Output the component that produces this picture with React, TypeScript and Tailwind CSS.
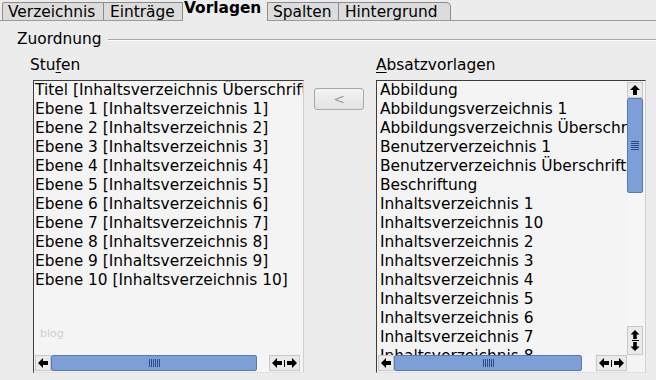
import React from "react";

const leftItems = [
  "Titel [Inhaltsverzeichnis Überschrift]",
  "Ebene 1 [Inhaltsverzeichnis 1]",
  "Ebene 2 [Inhaltsverzeichnis 2]",
  "Ebene 3 [Inhaltsverzeichnis 3]",
  "Ebene 4 [Inhaltsverzeichnis 4]",
  "Ebene 5 [Inhaltsverzeichnis 5]",
  "Ebene 6 [Inhaltsverzeichnis 6]",
  "Ebene 7 [Inhaltsverzeichnis 7]",
  "Ebene 8 [Inhaltsverzeichnis 8]",
  "Ebene 9 [Inhaltsverzeichnis 9]",
  "Ebene 10 [Inhaltsverzeichnis 10]",
];

const rightItems = [
  "Abbildung",
  "Abbildungsverzeichnis 1",
  "Abbildungsverzeichnis Überschrift",
  "Benutzerverzeichnis 1",
  "Benutzerverzeichnis Überschrift",
  "Beschriftung",
  "Inhaltsverzeichnis 1",
  "Inhaltsverzeichnis 10",
  "Inhaltsverzeichnis 2",
  "Inhaltsverzeichnis 3",
  "Inhaltsverzeichnis 4",
  "Inhaltsverzeichnis 5",
  "Inhaltsverzeichnis 6",
  "Inhaltsverzeichnis 7",
  "Inhaltsverzeichnis 8",
];

function ArrowLeft() {
  return (
    <svg width="10" height="10" viewBox="0 0 10 10">
      <path d="M0 5 L5 0 L5 3 L10 3 L10 7 L5 7 L5 10 Z" fill="#000" />
    </svg>
  );
}
function ArrowRight() {
  return (
    <svg width="10" height="10" viewBox="0 0 10 10">
      <path d="M10 5 L5 0 L5 3 L0 3 L0 7 L5 7 L5 10 Z" fill="#000" />
    </svg>
  );
}
function ArrowUp({ h = 10 }: { h?: number }) {
  return (
    <svg width="10" height={h} viewBox="0 0 10 10">
      <path d="M5 0 L10 5 L7 5 L7 10 L3 10 L3 5 L0 5 Z" fill="#000" />
    </svg>
  );
}
function ArrowDown({ h = 10 }: { h?: number }) {
  return (
    <svg width="10" height={h} viewBox="0 0 10 10">
      <path d="M5 10 L10 5 L7 5 L7 0 L3 0 L3 5 L0 5 Z" fill="#000" />
    </svg>
  );
}

function HScroll({ thumb, track }: { thumb: number; track: number }) {
  return (
    <div className="flex h-[16px] bg-[#f4f4f4]">
      <div className="w-[16px] h-[16px] flex items-center justify-center bg-[#eaeaea] border border-[#c8c8c8]">
        <ArrowLeft />
      </div>
      <div className="flex-1 flex bg-[#f2f2f2]">
        <div
          className="h-[16px] bg-[#7c9fd8] border border-[#5a78b4] rounded-[2px] flex items-center justify-center"
          style={{ width: thumb }}
        >
          <div className="flex gap-[1px]">
            {[0, 1, 2, 3, 4, 5].map((i) => (
              <div key={i} className="w-[1px] h-[8px] bg-[#2a4a8a]" />
            ))}
          </div>
        </div>
        <div style={{ width: track }} className="h-[16px] bg-[#f6f6f6]" />
      </div>
      <div className="w-[31px] h-[16px] flex items-center justify-center gap-[2px] bg-[#eaeaea] border border-[#c8c8c8]">
        <ArrowLeft />
        <div className="w-[1px] h-[7px] bg-black" />
        <ArrowRight />
      </div>
    </div>
  );
}

export default function App() {
  const font = { fontFamily: '"DejaVu Sans", Verdana, sans-serif' };
  return (
    <div
      className="w-[656px] h-[380px] bg-[#ececec] text-[15.4px] text-black overflow-hidden"
      style={font}
    >
      {/* tabs */}
      <div className="flex h-[21px] pl-[2px] border-b border-[#9a9a9a] leading-[18px]">
        <div className="w-[102px] mt-[2px] h-[18px] bg-[#dcdcdc] border border-b-0 border-[#8c8c8c] pl-[5px] rounded-tl-[2px]">
          Verzeichnis
        </div>
        <div className="w-[79px] mt-[2px] h-[18px] bg-[#dcdcdc] border border-l-0 border-b-0 border-[#8c8c8c] pl-[6px]">
          Einträge
        </div>
        <div className="w-[84px] h-[21px] -mb-[1px] bg-[#ececec] font-bold pl-[1px] leading-[16px]">
          Vorlagen
        </div>
        <div className="w-[72px] mt-[2px] h-[18px] bg-[#dcdcdc] border border-b-0 border-[#8c8c8c] pl-[5px]">
          Spalten
        </div>
        <div className="w-[112px] mt-[2px] h-[18px] bg-[#dcdcdc] border border-l-0 border-b-0 border-[#8c8c8c] pl-[6px] rounded-tr-[5px]">
          Hintergrund
        </div>
      </div>

      {/* group header */}
      <div className="flex items-center pl-[17px] mt-[9px] h-[19px]">
        <span>Zuordnung</span>
        <div className="flex-1 ml-[6px] border-t border-[#a8a8a8] border-b border-b-white" />
      </div>

      <div className="flex pl-[33px] mt-[1px]">
        {/* left column */}
        <div className="w-[271px] flex flex-col">
          <div className="h-[30px] pt-[5px] -ml-[3px] leading-[20px]">
            Stu<span className="underline underline-offset-2">f</span>en
          </div>
          <div className="h-[293px] bg-[#f4f4f4] border-l border-t border-[#3c3c3c] border-r border-r-[#d0d0d0] border-b border-b-[#e0e0e0] flex flex-col relative">
            <div className="flex-1 pl-[1px] leading-[19px] overflow-hidden whitespace-nowrap">
              {leftItems.map((t) => (
                <div key={t} className="h-[19px]">
                  {t}
                </div>
              ))}
            </div>
            <div className="absolute left-[6px] top-[245px] text-[11px] text-[#cfcfcf]">
              blog
            </div>
            <div className="pl-[1px] pr-[3px] pb-[1px]">
              <HScroll thumb={206} track={12} />
            </div>
          </div>
        </div>

        {/* button column */}
        <div className="w-[72px] flex pt-[38px] pl-[10px]">
          <div className="w-[50px] h-[22px] rounded-[3px] border border-[#a8a8a8] bg-gradient-to-b from-[#f4f4f4] to-[#e2e2e2] flex items-center justify-center text-[#a0a0a0] text-[14px]">
            &lt;
          </div>
        </div>

        {/* right column */}
        <div className="w-[270px] flex flex-col">
          <div className="h-[30px] pt-[5px] leading-[20px]">
            <span className="underline underline-offset-2">A</span>bsatzvorlagen
          </div>
          <div className="h-[293px] bg-[#f4f4f4] border-l border-t border-[#3c3c3c] border-r border-r-[#d0d0d0] border-b border-b-[#e0e0e0] flex flex-col">
            <div className="flex h-[274px]">
              <div className="flex-1 pl-[3px] leading-[19px] overflow-hidden whitespace-nowrap">
                {rightItems.map((t) => (
                  <div key={t} className="h-[19px]">
                    {t}
                  </div>
                ))}
              </div>
              <div className="w-[16px] mr-[2px] flex flex-col bg-[#f6f6f6]">
                <div className="h-[16px] flex items-center justify-center bg-[#eaeaea] border border-[#c8c8c8] mt-[1px]">
                  <ArrowUp />
                </div>
                <div className="h-[95px] bg-[#7c9fd8] border border-[#5a78b4] rounded-[2px] flex items-center justify-center">
                  <div className="flex flex-col gap-[1px]">
                    {[0, 1, 2, 3, 4].map((i) => (
                      <div key={i} className="h-[1px] w-[8px] bg-[#2a4a8a]" />
                    ))}
                  </div>
                </div>
                <div className="flex-1 bg-[#f6f6f6]" />
                <div className="h-[29px] flex flex-col items-center justify-center bg-[#eaeaea] border border-[#c8c8c8]">
                  <ArrowUp h={9} />
                  <div className="w-[7px] h-[1px] bg-black my-[1px]" />
                  <ArrowDown h={9} />
                </div>
              </div>
            </div>
            <div className="flex pl-[1px] pb-[1px]">
              <div className="w-[249px]">
                <HScroll thumb={188} track={13} />
              </div>
              <div className="flex-1" />
            </div>
          </div>
        </div>
      </div>
    </div>
  );
}
